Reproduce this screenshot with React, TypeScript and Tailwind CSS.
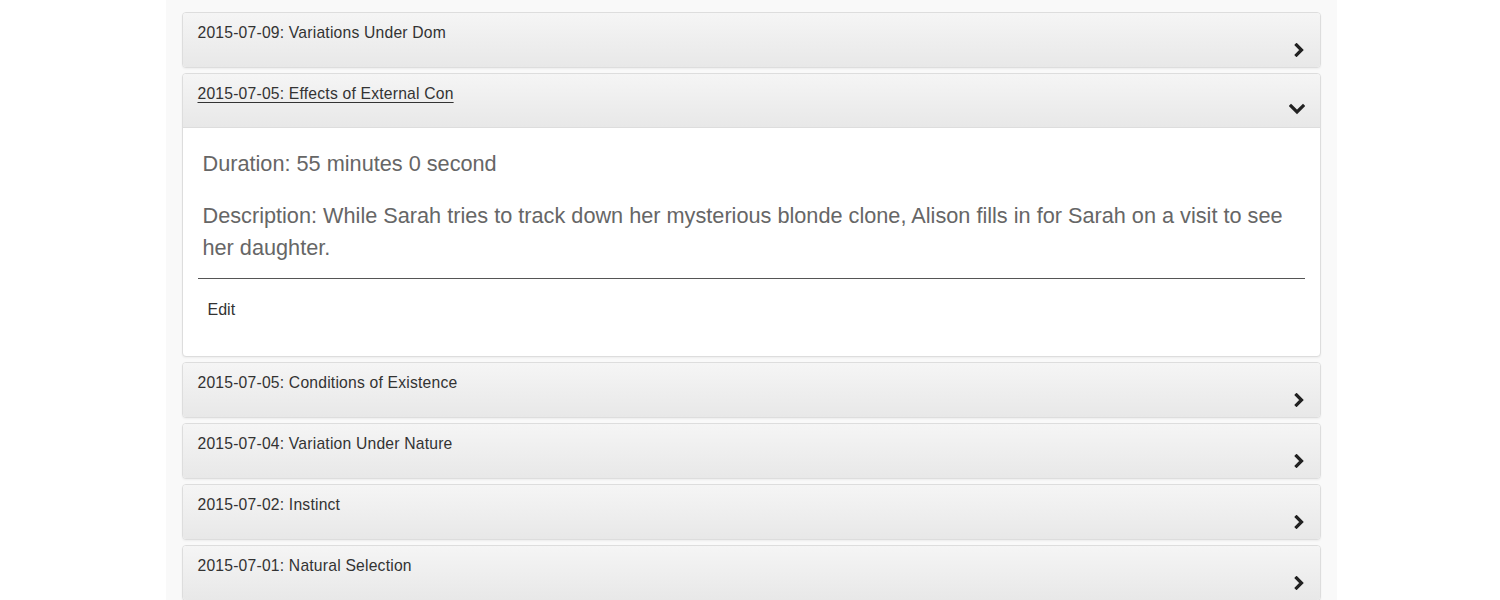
const episodes = [
  { title: "2015-07-09: Variations Under Dom", open: false },
  {
    title: "2015-07-05: Effects of External Con",
    open: true,
    duration: "55 minutes 0 second",
    description:
      "While Sarah tries to track down her mysterious blonde clone, Alison fills in for Sarah on a visit to see her daughter.",
  },
  { title: "2015-07-05: Conditions of Existence", open: false },
  { title: "2015-07-04: Variation Under Nature", open: false },
  { title: "2015-07-02: Instinct", open: false },
  { title: "2015-07-01: Natural Selection", open: false },
];

function Chevron({ open }: { open: boolean }) {
  if (open) {
    return (
      <svg width="16" height="12" viewBox="0 0 16 12" className="block -mt-[4px] -mr-[1px]">
        <polyline points="2,3 8,9 14,3" fill="none" stroke="#222" strokeWidth="3.2" strokeLinecap="square" />
      </svg>
    );
  }
  return (
    <svg width="10" height="14" viewBox="0 0 10 14" className="block">
      <polyline points="2.5,2 7.5,7 2.5,12" fill="none" stroke="#222" strokeWidth="3.2" strokeLinecap="square" />
    </svg>
  );
}

export default function App() {
  return (
    <div className="min-h-[600px] bg-white font-['Liberation_Sans',Arial,sans-serif]">
      <div className="mx-auto w-[1171px] min-h-[600px] bg-[#f9f9f9] px-4 pt-3 flex flex-col gap-[5px] relative left-[1px]">
        {episodes.map((ep) => (
          <div
            key={ep.title}
            className="rounded-[4px] border border-[#dddddd] bg-white shadow-[0_1px_2px_rgba(0,0,0,0.05)] overflow-hidden"
          >
            <div
              className={`bg-gradient-to-b from-[#f5f5f5] to-[#e8e8e8] pl-[15px] pr-[16px] pt-[10px] ${
                ep.open ? "border-b border-[#dddddd] pb-[9px]" : "pb-[10px]"
              }`}
            >
              <div
                className={`text-[15.7px] leading-[20px] tracking-[0.2px] text-[#333] ${
                  ep.open ? "underline underline-offset-[3px]" : ""
                }`}
              >
                {ep.title}
              </div>
              <div className="flex justify-end h-[14px] items-center">
                <Chevron open={ep.open} />
              </div>
            </div>
            {ep.open && (
              <div className="px-[15px] pt-[20px] pb-[35px]">
                <p className="px-[5px] text-[21.7px] leading-[32px] text-[#666]">Duration: {ep.duration}</p>
                <p className="mt-[20px] px-[5px] text-[21.7px] leading-[32px] text-[#666]">
                  Description: {ep.description}
                </p>
                <hr className="mt-[14px] border-t border-[#555]" />
                <div className="mt-[20px] px-[10px] text-[16px] leading-[22px] text-[#333]">Edit</div>
              </div>
            )}
          </div>
        ))}
      </div>
    </div>
  );
}
